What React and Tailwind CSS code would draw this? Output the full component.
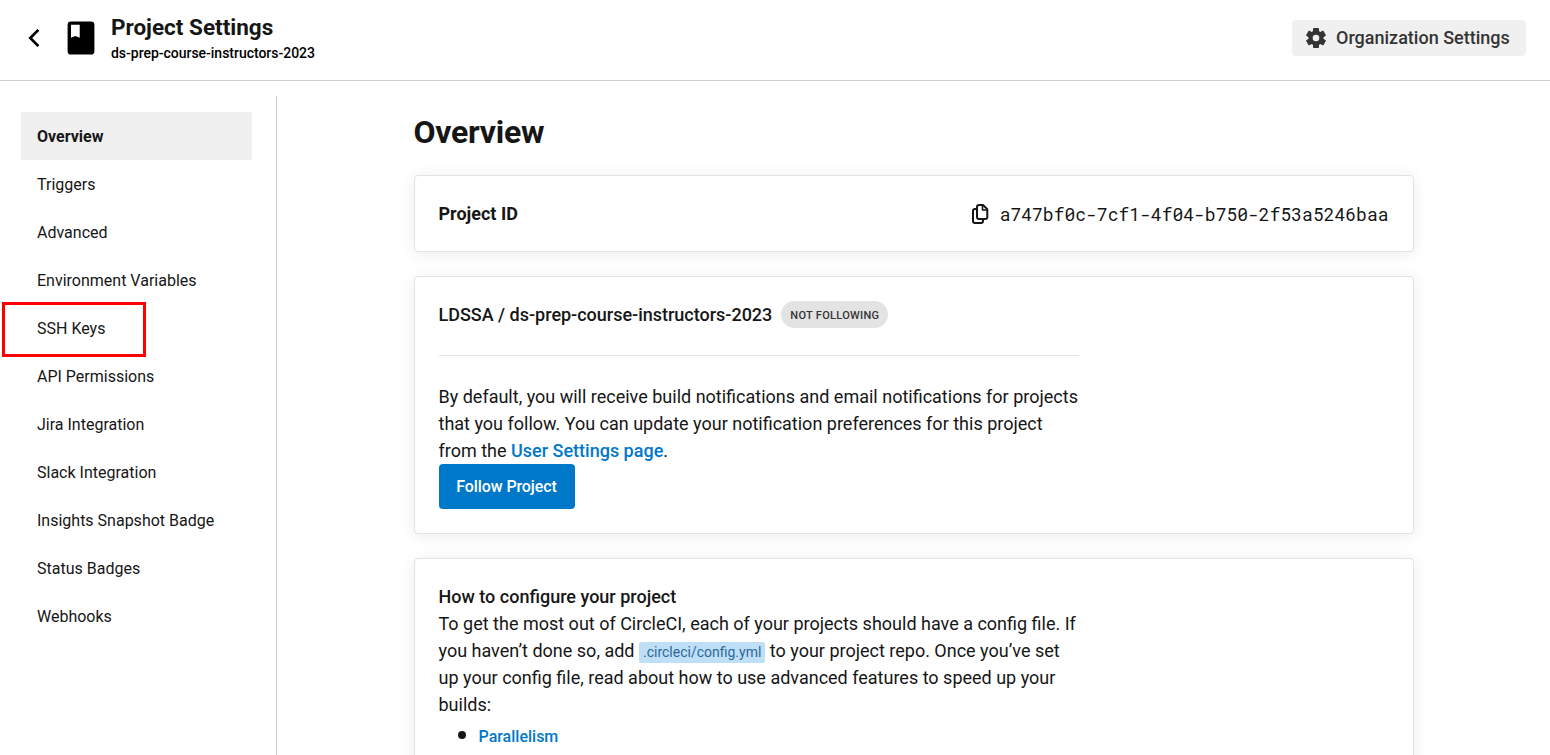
import React from 'react';

const navItems = [
  'Overview',
  'Triggers',
  'Advanced',
  'Environment Variables',
  'SSH Keys',
  'API Permissions',
  'Jira Integration',
  'Slack Integration',
  'Insights Snapshot Badge',
  'Status Badges',
  'Webhooks',
];

function GearIcon() {
  return (
    <svg className="h-5 w-5 shrink-0" viewBox="0 0 20 20" fill="#343434">
      <circle cx="10" cy="10" r="7.6" />
      <rect x="7" y="0" width="6" height="20" rx="0.8" />
      <rect x="7" y="0" width="6" height="20" rx="0.8" transform="rotate(60 10 10)" />
      <rect x="7" y="0" width="6" height="20" rx="0.8" transform="rotate(120 10 10)" />
      <circle cx="10" cy="10" r="3.3" fill="#f0f0f0" />
    </svg>
  );
}

function CopyIcon() {
  return (
    <svg className="h-5 w-[17px] shrink-0" viewBox="0 0 17 20" fill="none" stroke="#161616" strokeWidth="2" strokeLinejoin="round">
      <path d="M7 1 H11 L15.300 5.200 V13 a2 2 0 0 1-2 2 H7 a2 2 0 0 1-2-2 V3 A2 2 0 0 1 7 1 Z" />
      <path d="M10.500 1.500 V6 H15" strokeWidth="1.600" />
      <path d="M4.500 5 H3 a2 2 0 0 0-2 2 V17 a2 2 0 0 0 2 2 H9 a2 2 0 0 0 2-2 V15.500" />
    </svg>
  );
}

function Header() {
  return (
    <header className="flex h-[81px] shrink-0 items-center border-b border-[#d0d0d0] pl-7 pr-6 pb-1">
      <svg className="h-[18px] w-3 shrink-0" viewBox="0 0 12 18" fill="none" stroke="#000" strokeWidth="2.7">
        <path d="M10.400 0.900 L2.300 9 L10.400 17.100" />
      </svg>
      <svg className="ml-[27px] h-[34px] w-7 shrink-0" viewBox="0 0 28 34">
        <rect x="0.6" y="0.4" width="26.8" height="33.200" rx="3.400" fill="#000" />
        <path d="M4 3.700 H12.700 V16.800 L8.350 15 L4 16.800 Z" fill="#fff" />
      </svg>
      <div className="ml-4 flex flex-col pt-[3px]">
        <h1 className="-mt-px text-[22.5px] leading-7 font-bold">Project Settings</h1>
        <p className="text-sm leading-6 font-medium tracking-[-0.02px] text-black">ds-prep-course-instructors-2023</p>
      </div>
      <button className="ml-auto flex h-9 w-[234px] items-center gap-2.5 rounded bg-[#f0f0f0] pl-3.5 text-lg font-medium whitespace-nowrap text-[#343434]">
        <GearIcon />
        Organization Settings
      </button>
    </header>
  );
}

function Sidebar() {
  return (
    <aside className="mt-[15px] w-[277px] shrink-0 border-r border-[#d0d0d0] pt-4 pr-6 pl-[21px]">
      <nav className="flex flex-col">
        {navItems.map((item, i) => (
          <a
            key={item}
            className={
              i === 0
                ? 'flex h-12 items-center bg-[#f0f0f0] pt-0.5 pl-4 text-base font-bold'
                : 'relative flex h-12 items-center pt-0.5 pl-4 text-base'
            }
          >
            {item}
            {item === 'SSH Keys' && (
              <span className="absolute -top-[2px] -left-[19px] h-[55px] w-[144px] border-3 border-[#ff0000]" />
            )}
          </a>
        ))}
      </nav>
    </aside>
  );
}

function Card({ children, className = '' }) {
  return (
    <section className={'rounded border border-[#e3e3e3] bg-white p-6 shadow-[0_2px_16px_rgba(0,0,0,0.08)] ' + className}>
      {children}
    </section>
  );
}

export default function App() {
  return (
    <div className="flex h-[755px] w-full flex-col overflow-hidden bg-white font-['Roboto',sans-serif] text-[#161616]">
      <Header />
      <div className="flex min-h-0 flex-1">
        <Sidebar />
        <main className="ml-[136.5px] w-[1000px] shrink-0 pt-[27px]">
          <h2 className="text-[32px] leading-12 font-bold tracking-[-0.26px]">Overview</h2>
          <Card className="mt-[19px] flex h-[77px] items-center">
            <h3 className="text-lg font-bold">Project ID</h3>
            <div className="ml-auto flex items-center">
              <CopyIcon />
              <span className="ml-[11px] font-['Roboto_Mono','Liberation_Mono',monospace] text-lg leading-7">a747bf0c-7cf1-4f04-b750-2f53a5246baa</span>
            </div>
          </Card>
          <Card className="mt-6 h-[258px]">
            <div className="flex h-[27px] items-center">
              <h3 className="text-lg font-medium tracking-[-0.01px]">LDSSA / ds-prep-course-instructors-2023</h3>
              <span className="ml-[9px] flex h-[27px] w-[107px] items-center justify-center rounded-full bg-[#e3e3e3] pt-[3px] text-[11px] font-medium tracking-[0.3px] whitespace-nowrap text-[#343434]">NOT FOLLOWING</span>
            </div>
            <hr className="mt-[27px] w-[640px] border-[#e3e3e3]" />
            <p className="mt-[27px] w-[640px] text-lg leading-[27px]">
              By default, you will receive build notifications and email notifications for projects that you follow. You can update your notification preferences for this project from the{' '}
              <a className="font-medium text-[#0078ca]">User Settings page</a>.
            </p>
            <button className="flex h-[45px] w-[136px] items-center justify-center rounded bg-[#0078ca] text-base font-medium tracking-[-0.1px] text-white">Follow Project</button>
          </Card>
          <Card className="mt-6 h-[400px]">
            <h3 className="text-lg leading-[27px] font-medium">How to configure your project</h3>
            <p className="w-[640px] text-lg leading-[27px]">
              To get the most out of CircleCI, each of your projects should have a config file. If you haven’t done so, add{' '}
              <code className="rounded-xs bg-[#bfdff7] px-1 pt-0.5 pb-[3px] font-['Roboto',sans-serif] text-sm text-[#2c6897]">.circleci/config.yml</code>{' '}
              to your project repo. Once you’ve set up your config file, read about how to use advanced features to speed up your builds:
            </p>
            <ul className="mt-[5px] pl-[19px]">
              <li className="flex h-[27px] items-center">
                <span className="mr-[13px] mb-1 h-2 w-2 rounded-full bg-[#161616]" />
                <a className="text-base font-medium text-[#0078ca]">Parallelism</a>
              </li>
            </ul>
          </Card>
        </main>
      </div>
    </div>
  );
}
